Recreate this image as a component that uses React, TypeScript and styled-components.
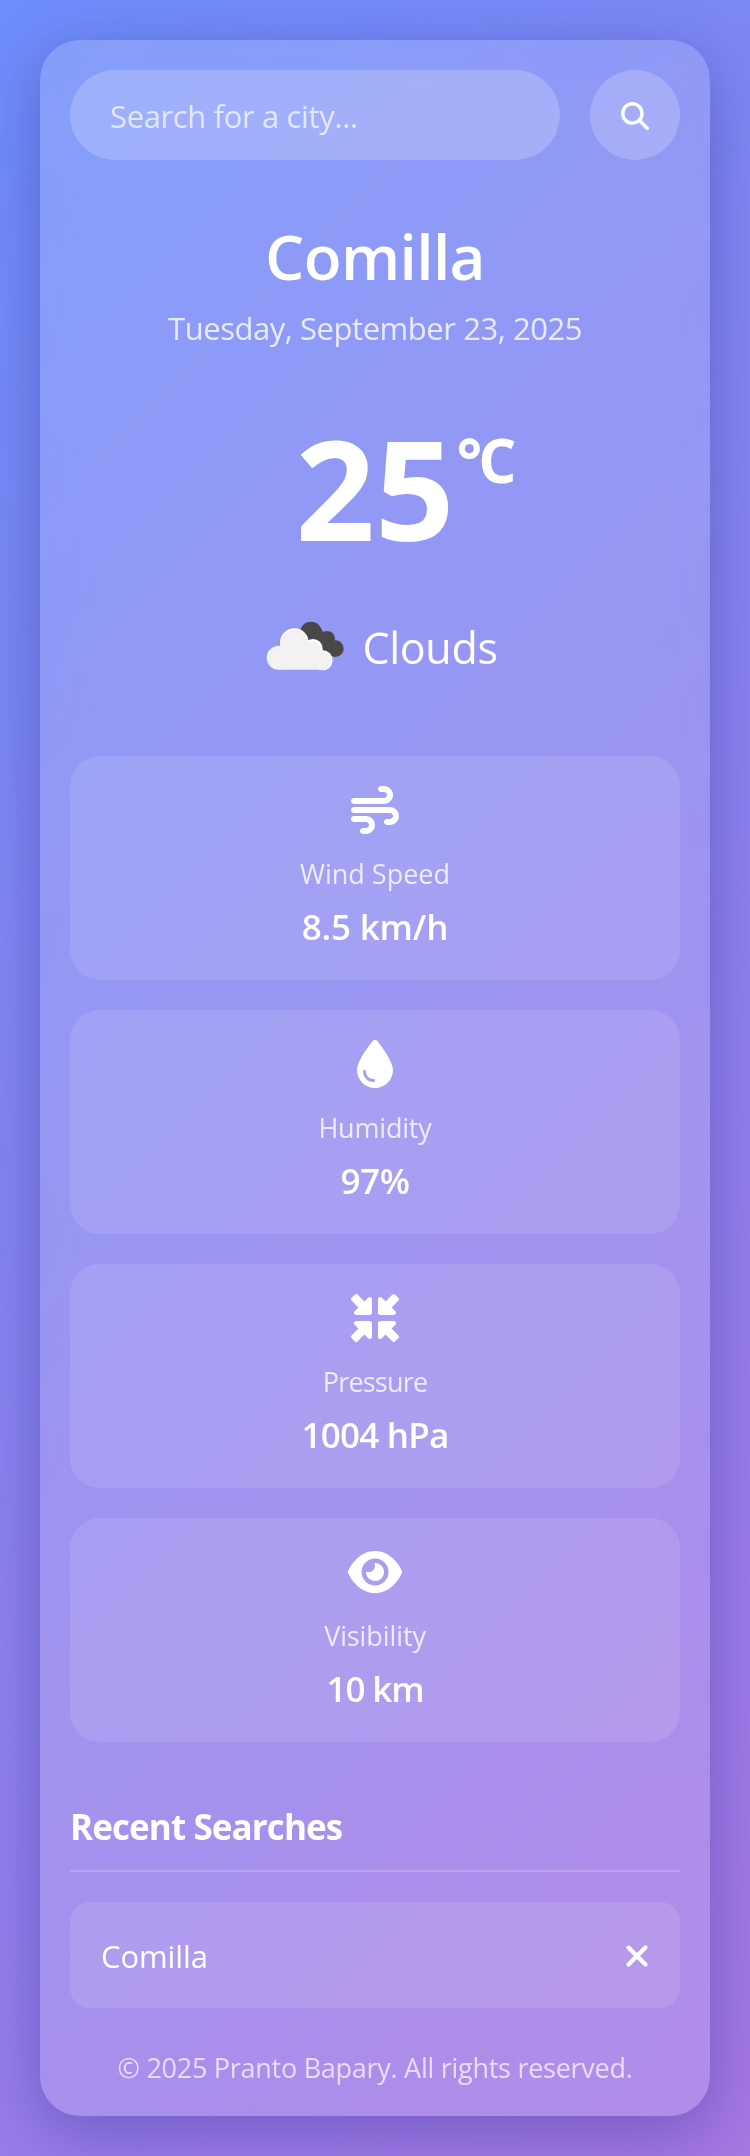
import React from 'react';
import styled, { createGlobalStyle } from 'styled-components';
import type { IconType } from 'react-icons';
import {
  FaDroplet,
  FaEye,
  FaMagnifyingGlass,
  FaMinimize,
  FaWind,
  FaXmark,
} from 'react-icons/fa6';

const GlobalStyle = createGlobalStyle`
  * { box-sizing: border-box; margin: 0; padding: 0; }
  body {
    font-family: 'Open Sans', 'Noto Sans', sans-serif;
    color: #fff;
  }
`;

const Page = styled.main`
  display: flex;
  width: 100%;
  height: 2156px;
  padding: 40px;
  background: linear-gradient(135deg, #6e8efb, #a777e3);
`;

const WeatherCard = styled.section`
  display: flex;
  flex-direction: column;
  flex: 1;
  padding: 30px;
  border-radius: 40px;
  background: rgba(255, 255, 255, 0.15);
  backdrop-filter: blur(20px);
  box-shadow: 0 16px 64px rgba(31, 38, 135, 0.37);
`;

const SearchBar = styled.form`
  display: flex;
  gap: 30px;
  height: 90px;
`;

const SearchInput = styled.input`
  flex: 1;
  min-width: 0;
  padding: 1px 40px 0;
  border: none;
  border-radius: 45px;
  outline: none;
  background: rgba(255, 255, 255, 0.2);
  color: #fff;
  font: 400 31px 'Open Sans', 'Noto Sans', sans-serif;
  letter-spacing: -0.36px;

  &::placeholder {
    color: rgba(255, 255, 255, 0.7);
    opacity: 1;
  }
`;

const SearchButton = styled.button`
  display: flex;
  align-items: center;
  justify-content: center;
  width: 90px;
  height: 90px;
  padding-top: 1px;
  border: none;
  border-radius: 50%;
  background: rgba(255, 255, 255, 0.2);
  color: #fff;
  font-size: 28px;
`;

const Summary = styled.div`
  display: flex;
  flex-direction: column;
  flex-shrink: 0;
  align-items: center;
  height: 596px;
  padding-top: 53px;
`;

const City = styled.h1`
  font-size: 62px;
  font-weight: 600;
  line-height: 86px;
  letter-spacing: -0.6px;
`;

const DateLine = styled.p`
  margin-top: 8px;
  font-size: 31px;
  line-height: 42px;
  letter-spacing: -0.45px;
  opacity: 0.8;
`;

const Temperature = styled.div`
  position: relative;
  margin-top: 37px;
  padding: 0 3px;
  font-size: 139px;
  font-weight: 700;
  line-height: 202px;
`;

const Unit = styled.span`
  position: absolute;
  top: 44px;
  left: 100%;
  margin-left: -1px;
  font-size: 60px;
  line-height: 60px;
  letter-spacing: -4px;
`;

const Condition = styled.div`
  display: flex;
  align-items: center;
  gap: 10px;
  margin-top: 8px;
`;

const ConditionName = styled.span`
  padding-top: 2px;
  font-size: 43px;
  letter-spacing: -0.3px;
`;

const CloudImage = styled.svg`
  width: 100px;
  height: 100px;
`;

const Details = styled.div`
  display: grid;
  gap: 30px;
`;

const DetailCard = styled.article`
  display: flex;
  flex-direction: column;
  align-items: center;
  height: 224px;
  padding: 30px;
  border-radius: 30px;
  background: rgba(255, 255, 255, 0.1);
`;

const DetailIcon = styled.div<{ $width: number }>`
  display: flex;

  svg {
    width: ${({ $width }) => $width}px;
    height: 48px;
  }
`;

const DetailLabel = styled.p<{ $spacing: number }>`
  margin-top: 21px;
  font-size: 27px;
  line-height: 38px;
  letter-spacing: ${({ $spacing }) => $spacing}px;
  opacity: 0.8;
`;

const DetailValue = styled.p<{ $spacing: number }>`
  margin-top: 10px;
  font-size: 35px;
  font-weight: 600;
  line-height: 48px;
  letter-spacing: ${({ $spacing }) => $spacing}px;
`;

const RecentTitle = styled.h2`
  height: 70px;
  margin-top: 60px;
  border-bottom: 2px solid rgba(255, 255, 255, 0.2);
  font-size: 35px;
  font-weight: 700;
  line-height: 50px;
  letter-spacing: -0.9px;
`;

const RecentItem = styled.div`
  display: flex;
  align-items: center;
  justify-content: space-between;
  height: 106px;
  margin-top: 30px;
  padding: 2px 26px 0 31px;
  border-radius: 20px;
  background: rgba(255, 255, 255, 0.1);
  font-size: 31px;
  letter-spacing: -0.1px;
`;

const RemoveButton = styled.button`
  display: flex;
  border: none;
  background: none;
  color: #fff;
  font-size: 34px;
`;

const Footer = styled.footer`
  margin-top: 42px;
  text-align: center;
  font-size: 27px;
  line-height: 36px;
  letter-spacing: -0.27px;
  opacity: 0.7;
`;

interface Detail {
  icon: IconType;
  iconWidth: number;
  label: string;
  value: string;
  labelSpacing: number;
  valueSpacing: number;
}

const details: Detail[] = [
  { icon: FaWind, iconWidth: 48, label: 'Wind Speed', value: '8.5 km/h', labelSpacing: 0, valueSpacing: -0.2 },
  { icon: FaDroplet, iconWidth: 36, label: 'Humidity', value: '97%', labelSpacing: -0.2, valueSpacing: -0.4 },
  { icon: FaMinimize, iconWidth: 48, label: 'Pressure', value: '1004 hPa', labelSpacing: -0.8, valueSpacing: -0.8 },
  { icon: FaEye, iconWidth: 54, label: 'Visibility', value: '10 km', labelSpacing: -0.1, valueSpacing: -1.1 },
];

const CloudIcon = () => (
  <CloudImage viewBox="0 0 300 300" aria-hidden="true">
    <g fill="#484848">
      <circle cx="177" cy="110" r="33" />
      <circle cx="225" cy="129" r="24" />
      <circle cx="250" cy="158" r="25" />
      <path d="M150 112 L205 95 L235 140 L250 183 L190 150 Z" />
    </g>
    <g fill="#fff">
      <circle cx="127" cy="140" r="43" />
      <circle cx="183" cy="158" r="29" />
      <circle cx="212" cy="193" r="30" />
    </g>
    <g fill="#f2f2f2">
      <circle cx="126" cy="141" r="40" />
      <circle cx="80" cy="185" r="36" />
      <circle cx="179" cy="164" r="28" />
      <circle cx="212" cy="194" r="27" />
      <path d="M80 160 L126 130 L190 160 L212 190 V221 H80 Z" />
    </g>
  </CloudImage>
);

export default function App() {
  return (
    <>
      <GlobalStyle />
      <Page>
        <WeatherCard>
          <SearchBar>
            <SearchInput placeholder="Search for a city..." />
            <SearchButton type="button" aria-label="Search">
              <FaMagnifyingGlass />
            </SearchButton>
          </SearchBar>
          <Summary>
            <City>Comilla</City>
            <DateLine>Tuesday, September 23, 2025</DateLine>
            <Temperature>
              25<Unit>°C</Unit>
            </Temperature>
            <Condition>
              <CloudIcon />
              <ConditionName>Clouds</ConditionName>
            </Condition>
          </Summary>
          <Details>
            {details.map(({ icon: Icon, iconWidth, label, value, labelSpacing, valueSpacing }) => (
              <DetailCard key={label}>
                <DetailIcon $width={iconWidth}>
                  <Icon />
                </DetailIcon>
                <DetailLabel $spacing={labelSpacing}>{label}</DetailLabel>
                <DetailValue $spacing={valueSpacing}>{value}</DetailValue>
              </DetailCard>
            ))}
          </Details>
          <RecentTitle>Recent Searches</RecentTitle>
          <RecentItem>
            <span>Comilla</span>
            <RemoveButton type="button" aria-label="Remove Comilla">
              <FaXmark />
            </RemoveButton>
          </RecentItem>
          <Footer>© 2025 Pranto Bapary. All rights reserved.</Footer>
        </WeatherCard>
      </Page>
    </>
  );
}
